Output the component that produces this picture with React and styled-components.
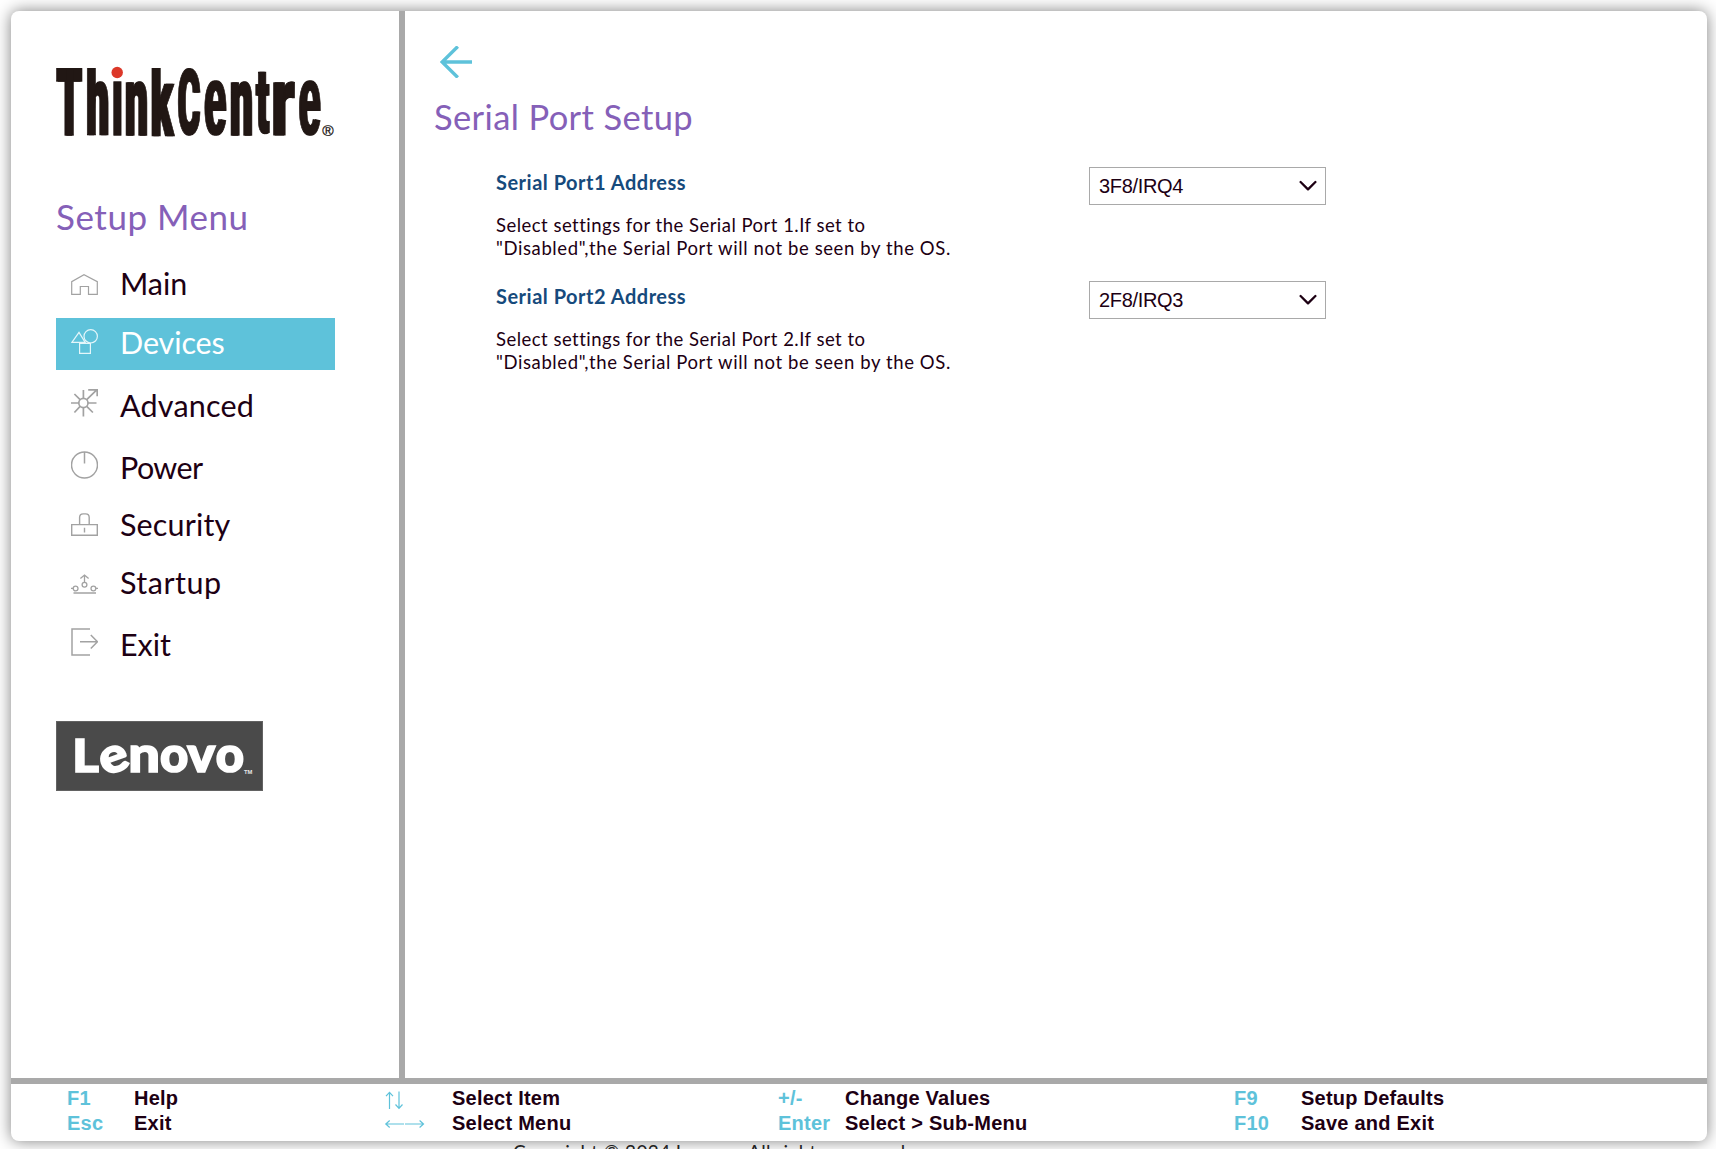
import React from "react";
import styled, { createGlobalStyle } from "styled-components";

const SANS = 'Lato, "Liberation Sans", sans-serif';
const ARIAL = '"Liberation Sans", Arial, sans-serif';

const GlobalStyle = createGlobalStyle`
  *, *::before, *::after { box-sizing: border-box; }
  html, body { margin: 0; background: #fff; overflow: hidden; }
  body { font-family: ${SANS}; color: #1d0013; }
`;

const Screen = styled.div`
  height: 100vh;
  overflow: hidden;
  padding: 11px 9px 0 11px;
  display: flex;
  flex-direction: column;
`;
const Frame = styled.div`
  height: 1130px;
  flex: none;
  display: flex;
  flex-direction: column;
  background: #fff;
  border-radius: 8px;
  box-shadow: 0 0 16px rgba(0, 0, 0, 0.5);
  overflow: hidden;
`;
const Body = styled.div`
  height: 1067px;
  display: flex;
`;
const Sidebar = styled.aside`
  width: 394px;
  flex: none;
  border-right: 6px solid #a9a9a9;
  padding: 53px 0 0 45px;
  display: flex;
  flex-direction: column;
  align-items: flex-start;
`;
const MenuTitle = styled.h2`
  margin: 55px 0 22px;
  font-size: 35px;
  line-height: 42px;
  font-weight: 400;
  letter-spacing: 0.53px;
  color: #8560b8;
  white-space: nowrap;
`;
const Menu = styled.nav`
  width: 279px;
  display: flex;
  flex-direction: column;
  gap: 7px;
`;
const Item = styled.a`
  height: ${(p) => p.$height}px;
  padding: 0 0 9px 15px;
  display: flex;
  align-items: flex-end;
  gap: 22px;
  color: ${(p) => (p.$active ? "#fff" : "#1d0013")};
  background: ${(p) => (p.$active ? "#5ec2da" : "transparent")};
`;
const Icon = styled.svg`
  flex: none;
  display: block;
  margin-bottom: 7px;
  fill: none;
  stroke: ${(p) => (p.$active ? "#e4f6fa" : "#a2a2a2")};
  stroke-width: 1.2;
`;
const Label = styled.span`
  font-size: 30.5px;
  line-height: 37px;
  letter-spacing: ${(p) => p.$ls || 0}px;
  white-space: nowrap;
`;
const Brand = styled.svg`
  display: block;
  flex: none;
  overflow: visible;
  margin-top: ${(p) => p.$top || 0}px;
`;

const Content = styled.main`
  flex: 1;
  padding: 35px 0 0 30px;
  display: flex;
  flex-direction: column;
  align-items: flex-start;
`;
const Back = styled.svg`
  display: block;
  flex: none;
  margin-left: 5px;
  fill: none;
  stroke: #5ec2da;
  stroke-width: 3.4;
`;
const Title = styled.h1`
  margin: 18px 0 0 -1px;
  font-size: 34.5px;
  line-height: 41px;
  font-weight: 400;
  letter-spacing: 0.38px;
  color: #8560b8;
`;
const Settings = styled.div`
  margin: 30px 0 0 61px;
  display: flex;
  flex-direction: column;
`;
const Setting = styled.section`
  height: 114px;
  display: grid;
  grid-template-columns: 593px 237px;
  align-items: start;
`;
const SettingName = styled.h3`
  margin: 3px 0 20px;
  font-size: 20px;
  line-height: 24px;
  font-weight: 700;
  color: #164a7c;
  letter-spacing: 0.5px;
`;
const HelpLine = styled.div`
  font-size: 18.5px;
  line-height: 23px;
  letter-spacing: ${(p) => p.$ls || 0}px;
  white-space: nowrap;
`;
const Select = styled.button`
  height: 38px;
  padding: 0 8px 0 9px;
  display: flex;
  align-items: center;
  justify-content: space-between;
  border: 1px solid #a9a9a9;
  background: #fff;
  color: #1d0013;
  font: 400 20px/36px ${ARIAL};
  letter-spacing: -0.32px;
`;

const KeyBar = styled.footer`
  height: 63px;
  border-top: 6px solid #a9a9a9;
  padding: 2px 0 0 56px;
  display: grid;
  grid-template-columns: 318px 393px 456px 400px;
  font: 700 20px/25px ${ARIAL};
  letter-spacing: 0.24px;
`;
const KeyGroup = styled.div`
  display: grid;
  grid-template-columns: 67px 1fr;
  grid-template-rows: 25px 25px;
`;
const Key = styled.span`
  color: #5ec2da;
  white-space: nowrap;
`;
const KeyArrows = styled.svg`
  display: block;
  margin-left: -1px;
  fill: none;
  stroke: #5ec2da;
  stroke-width: 1.2;
`;
const Action = styled.span`
  white-space: nowrap;
`;
const Copyright = styled.div`
  margin: -1px 0 0 502px;
  font-size: 19px;
  line-height: 23px;
  letter-spacing: 0.37px;
  color: #222;
  white-space: nowrap;
`;

const measure = (font, text) => {
  const ctx = document.createElement("canvas").getContext("2d");
  ctx.font = font;
  return ctx.measureText(text);
};

/* One character of a wordmark, stretched to fill the box [x, y, w, h].
   `widen` repeats the glyph sideways to thicken only its vertical stems. */
function Glyph({ ch, box, font, weight, stroke = 0, widen = 0, tilt = 0, color, clip }) {
  const [x, y, w, h] = box;
  const m = measure(`${weight} 1000px ${font}`, ch);
  const left = m.actualBoundingBoxLeft / 10;
  const ascent = m.actualBoundingBoxAscent / 10;
  const sx = (w - stroke - widen) / (m.actualBoundingBoxRight / 10 + left);
  const sy = (h - stroke) / (ascent + m.actualBoundingBoxDescent / 10);
  const tx = x + stroke / 2 + left * sx;
  const ty = y + stroke / 2 + ascent * sy;
  const rot = tilt ? `rotate(${tilt} ${x + w / 2} ${y + h / 2}) ` : "";
  const shifts = widen ? [0, widen] : [0];
  return (
    <g clipPath={clip}>
      {shifts.map((s) => (
        <text
          key={s}
          aria-hidden={s > 0 || undefined}
          transform={`${rot}matrix(${sx} 0 0 ${sy} ${tx + s} ${ty})`}
          fontFamily={font}
          fontWeight={weight}
          fontSize="100"
          fill={color}
          stroke={color}
          strokeWidth={stroke}
          vectorEffect="non-scaling-stroke"
        >
          {ch}
        </text>
      ))}
    </g>
  );
}

const THINK = [
  ["T", 0, 4, 27, 67],
  ["h", 30.3, -4, 22.7, 75],
  ["ı", 56.6, 16.5, 9.4, 54.5],
  ["n", 69, 16, 23, 55],
  ["k", 95.5, -4, 23.5, 75],
  ["C", 121.5, 3, 23.5, 69],
  ["e", 148, 16, 23, 56],
  ["n", 174, 16, 23, 55],
  ["t", 199, 7.3, 15.5, 64],
  ["r", 217, 16, 22.5, 55],
  ["e", 242.4, 16, 23, 56],
];
function ThinkCentreLogo() {
  return (
    <Brand width="280" height="76" viewBox="0 0 280 76">
      <defs>
        <clipPath id="capline">
          <rect x="0" y="4" width="280" height="72" />
        </clipPath>
      </defs>
      {THINK.map(([ch, ...box], i) => (
        <Glyph
          key={i}
          ch={ch}
          box={box}
          font={ch === "e" ? "Liberation Sans" : "Roboto"}
          weight={ch === "e" ? 700 : 900}
          stroke={1}
          widen={ch === "ı" ? 0 : ch === "e" ? 2.2 : 1.6}
          color="#211714"
          clip={ch === "h" || ch === "k" ? "url(#capline)" : undefined}
        />
      ))}
      <circle cx="61.2" cy="8.5" r="5.7" fill="#dc3829" />
      <text x="266.3" y="72.3" fontFamily="Liberation Sans" fontSize="15.5" fill="#211714" stroke="#211714" strokeWidth="0.3">®</text>
    </Brand>
  );
}

const LENOVO = [
  ["L", 18.7, 17, 24.8, 35],
  ["e", 43.5, 24.3, 28.5, 28.4, -20],
  ["n", 74, 24.3, 28, 27.7],
  ["o", 104, 24.3, 28.5, 28.4],
  ["v", 130.5, 25, 30.5, 27],
  ["o", 159.7, 24.3, 28.5, 28.4],
];
function LenovoLogo() {
  return (
    <Brand $top={49} width="207" height="70" viewBox="0 0 207 70">
      <rect x="0.5" y="0.5" width="206" height="69" fill="#4a4a4a" stroke="#626262" />
      {LENOVO.map(([ch, x, y, w, h, tilt], i) => (
        <Glyph key={i} ch={ch} box={[x, y, w, h]} tilt={tilt} font="Lato" weight={900} stroke={1.7} color="#fff" />
      ))}
      <text x="188" y="53.3" fontFamily="Liberation Sans" fontWeight="700" fontSize="5.8" fill="#e8e8e8">TM</text>
    </Brand>
  );
}

const icons = {
  main: [21, <path d="M0.7 20.3V7.6L13 0.8L26.3 7.6V20.3H17.5V12.5H9.3V20.3Z" />],
  devices: [25, <><path d="M0.9 13.4L8 3.4L14.2 13.4Z" /><circle cx="19.7" cy="7.3" r="6.7" /><path d="M8.6 14.4H19.4V24.4H8.6Z" /></>],
  advanced: [28, <g strokeWidth="1.7"><circle cx="12.4" cy="14" r="4.6" /><path d="M12.4 1V9.4M12.4 18.6V27.6M0 14H7.8M17 14H25.5M3.4 5L9.1 10.7M15.7 17.3L21.9 23.5M3.4 23.5L9.1 17.3M15.7 10.7L26 0.7M17.2 0.8H26.2V7.2" /></g>],
  power: [28, <g strokeWidth="1.5"><circle cx="13.5" cy="14" r="13" /><path d="M13.5 1V12.5" /></g>],
  security: [23, <g strokeWidth="1.4"><path d="M0.7 11.6H26.3V22.3H0.7ZM8.6 11.6V4.5Q8.6 0.9 12.2 0.9H14.6Q18.2 0.9 18.2 4.5V11.6M13.5 14.8V19.5" /></g>],
  startup: [20, <g strokeWidth="1.3"><path d="M2.5 19H25M13.5 1V8.3M9.4 4.6L13.5 1L17.6 4.6M0 14.4H2.2M24.8 14.4H27" /><circle cx="13.5" cy="10.8" r="2.4" /><circle cx="4.6" cy="14.5" r="2.4" /><circle cx="22.4" cy="14.5" r="2.4" /></g>],
  exit: [28, <g strokeWidth="1.5"><path d="M19 1H1V27H19M9 13.7H26.3M19.8 7L26.5 13.7L19.8 20.5" /></g>],
};

const MENU = [
  { id: "main", label: "Main", height: 52, ls: 0 },
  { id: "devices", label: "Devices", height: 52, ls: -0.1, active: true },
  { id: "advanced", label: "Advanced", height: 56, ls: 0.2 },
  { id: "power", label: "Power", height: 55, ls: -0.6 },
  { id: "security", label: "Security", height: 50, ls: 0.15 },
  { id: "startup", label: "Startup", height: 51, ls: 0.5 },
  { id: "exit", label: "Exit", height: 55, ls: 0 },
];

const SETTINGS = [
  { n: 1, value: "3F8/IRQ4" },
  { n: 2, value: "2F8/IRQ3" },
];

const Chevron = () => (
  <svg width="18" height="12" viewBox="0 0 18 12" fill="none" stroke="#1d0013" strokeWidth="2.3" strokeLinecap="round" strokeLinejoin="round">
    <path d="M1.6 2L9 9.4L16.4 2" />
  </svg>
);

export default function App() {
  return (
    <>
      <GlobalStyle />
      <Screen>
        <Frame>
          <Body>
            <Sidebar>
              <ThinkCentreLogo />
              <MenuTitle>Setup Menu</MenuTitle>
              <Menu>
                {MENU.map(({ id, label, height, ls, active }) => (
                  <Item key={id} $height={height} $active={active}>
                    <Icon $active={active} width="27" height={icons[id][0]} viewBox={`0 0 27 ${icons[id][0]}`}>
                      {icons[id][1]}
                    </Icon>
                    <Label $ls={ls}>{label}</Label>
                  </Item>
                ))}
              </Menu>
              <LenovoLogo />
            </Sidebar>
            <Content>
              <Back width="33" height="32" viewBox="0 0 33 32">
                <path d="M32 16H2M17.8 0.5L2.1 16L17.8 31.5" />
              </Back>
              <Title>Serial Port Setup</Title>
              <Settings>
                {SETTINGS.map(({ n, value }) => (
                  <Setting key={n}>
                    <div>
                      <SettingName>Serial Port{n} Address</SettingName>
                      <HelpLine $ls={0.48}>Select settings for the Serial Port {n}.If set to</HelpLine>
                      <HelpLine $ls={0.6}>"Disabled",the Serial Port will not be seen by the OS.</HelpLine>
                    </div>
                    <Select>
                      {value}
                      <Chevron />
                    </Select>
                  </Setting>
                ))}
              </Settings>
            </Content>
          </Body>
          <KeyBar>
            <KeyGroup>
              <Key>F1</Key><Action>Help</Action>
              <Key>Esc</Key><Action>Exit</Action>
            </KeyGroup>
            <KeyGroup>
              <KeyArrows width="42" height="25" viewBox="0 0 42 25">
                <path d="M5.5 23V6.5M2 10.2L5.5 6.3L9 10.2M15 5.5V22M11.5 18.5L15 22.3L18.5 18.5" />
              </KeyArrows>
              <Action>Select Item</Action>
              <KeyArrows width="42" height="25" viewBox="0 0 42 25">
                <path d="M20 13H2M5.7 9.5L1.8 13L5.7 16.5M21 13H39.3M35.6 9.5L39.5 13L35.6 16.5" />
              </KeyArrows>
              <Action>Select Menu</Action>
            </KeyGroup>
            <KeyGroup>
              <Key>+/-</Key><Action>Change Values</Action>
              <Key>Enter</Key><Action>Select &gt; Sub-Menu</Action>
            </KeyGroup>
            <KeyGroup>
              <Key>F9</Key><Action>Setup Defaults</Action>
              <Key>F10</Key><Action>Save and Exit</Action>
            </KeyGroup>
          </KeyBar>
        </Frame>
        <Copyright>Copyright © 2024 Lenovo. All rights reserved.</Copyright>
      </Screen>
    </>
  );
}
